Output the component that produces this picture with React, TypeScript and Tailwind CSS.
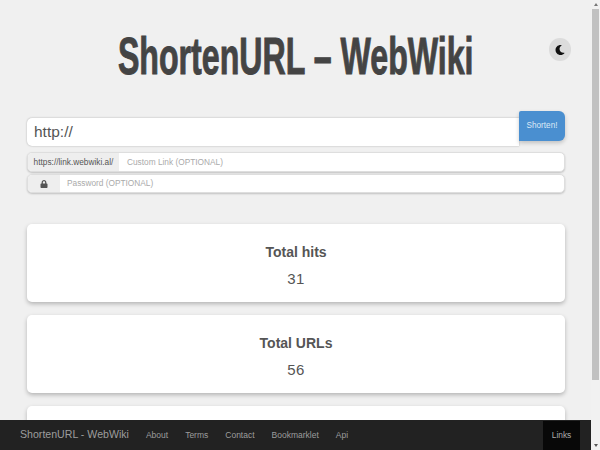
import { FaMoon, FaLock } from "react-icons/fa";

const sans = "font-['Liberation_Sans',Arial,sans-serif]";

function Card({ title, value }: { title: string; value?: string }) {
  return (
    <div className="h-[78px] shrink-0 rounded-[5px] bg-white pt-[18px] text-center text-[#555] shadow-[0_2px_4px_rgba(0,0,0,0.25)]">
      <div className="text-[14px] leading-[20px] font-bold">{title}</div>
      {value && <div className="mt-[7px] text-[15px] leading-[20px] tracking-[0.5px]">{value}</div>}
    </div>
  );
}

export default function App() {
  return (
    <div className={`flex h-[450px] w-[600px] overflow-hidden bg-[#f0f0f0] antialiased ${sans}`}>
      <div className="relative h-full w-[591px] shrink-0 overflow-hidden">
        <div className="relative h-[111px]">
          <h1 className="flex justify-center overflow-hidden pt-[27px] pl-[1px] text-[52px] leading-[58px] font-bold whitespace-nowrap text-[#444]">
            <span className="inline-block scale-x-[0.618] [-webkit-text-stroke:1px_#444]">ShortenURL – WebWiki</span>
          </h1>
          <button className="absolute top-[38px] left-[549px] flex h-[23px] w-[22px] items-center justify-center rounded-full bg-[#dcdcdc] text-[#111]">
            <FaMoon size={10} />
          </button>
        </div>

        <div className="flex flex-col px-[27px] pr-[26px]">
          <div className="flex h-[36px] items-start">
            <div className="mt-[7px] flex h-[28px] min-w-0 flex-1 items-center rounded-l-[5px] bg-white pl-[7px] text-[15.5px] text-[#555] shadow-[0_0_2px_rgba(0,0,0,0.3)]">
              http://
            </div>
            <button className="h-[30px] w-[46px] rounded-tr-[6px] rounded-br-[6px] rounded-tl-[2px] bg-[#4a8fd0] text-[8.2px] text-[#dce9f6] shadow-[0_2px_4px_rgba(0,0,0,0.2)]">
              Shorten!
            </button>
          </div>

          <div className="mt-[5px] flex h-[20px] overflow-hidden rounded-[5px] border border-[#dedede] bg-white shadow-[0_1px_2px_rgba(0,0,0,0.2)]">
            <div className="flex w-[91px] items-center justify-center bg-[#eeeeee] text-[8.3px] text-[#555]">https://link.webwiki.al/</div>
            <div className="flex flex-1 items-center pl-[8px] text-[8.3px] text-[#aaa]">Custom Link (OPTIONAL)</div>
          </div>

          <div className="mt-[2px] flex h-[19px] overflow-hidden rounded-[5px] border border-[#dedede] bg-white shadow-[0_1px_2px_rgba(0,0,0,0.2)]">
            <div className="flex w-[32px] items-center justify-center bg-[#eeeeee] text-[#555]"><FaLock size={8} /></div>
            <div className="flex flex-1 items-center pl-[7px] text-[8.3px] text-[#aaa]">Password (OPTIONAL)</div>
          </div>

          <div className="mt-[31px] flex flex-col gap-[13px]">
            <Card title="Total hits" value="31" />
            <Card title="Total URLs" value="56" />
            <Card title="" />
          </div>
        </div>

        <nav className="absolute inset-x-0 bottom-0 flex h-[30px] items-center bg-[#222] pl-[20px] text-[#9d9d9d]">
          <span className="text-[10.6px]">ShortenURL - WebWiki</span>
          <div className="ml-[17px] flex gap-[17px] text-[8.5px]">
            <span>About</span>
            <span>Terms</span>
            <span>Contact</span>
            <span>Bookmarklet</span>
            <span>Api</span>
          </div>
          <span className="absolute top-[1px] bottom-0 left-[543px] flex w-[37px] items-center justify-center bg-[#080808] text-[8.4px] text-[#aaa]">Links</span>
        </nav>
      </div>

      <div className="relative h-full flex-1 bg-[#f1f1f1]">
        <div className="absolute top-[3px] left-[3px] h-0 w-0 border-x-[2px] border-b-[3px] border-x-transparent border-b-[#777]" />
        <div className="absolute top-[9px] left-[1px] h-[371px] w-[7px] bg-[#c1c1c1]" />
        <div className="absolute bottom-[3px] left-[3px] h-0 w-0 border-x-[2px] border-t-[3px] border-x-transparent border-t-[#555]" />
      </div>
    </div>
  );
}
